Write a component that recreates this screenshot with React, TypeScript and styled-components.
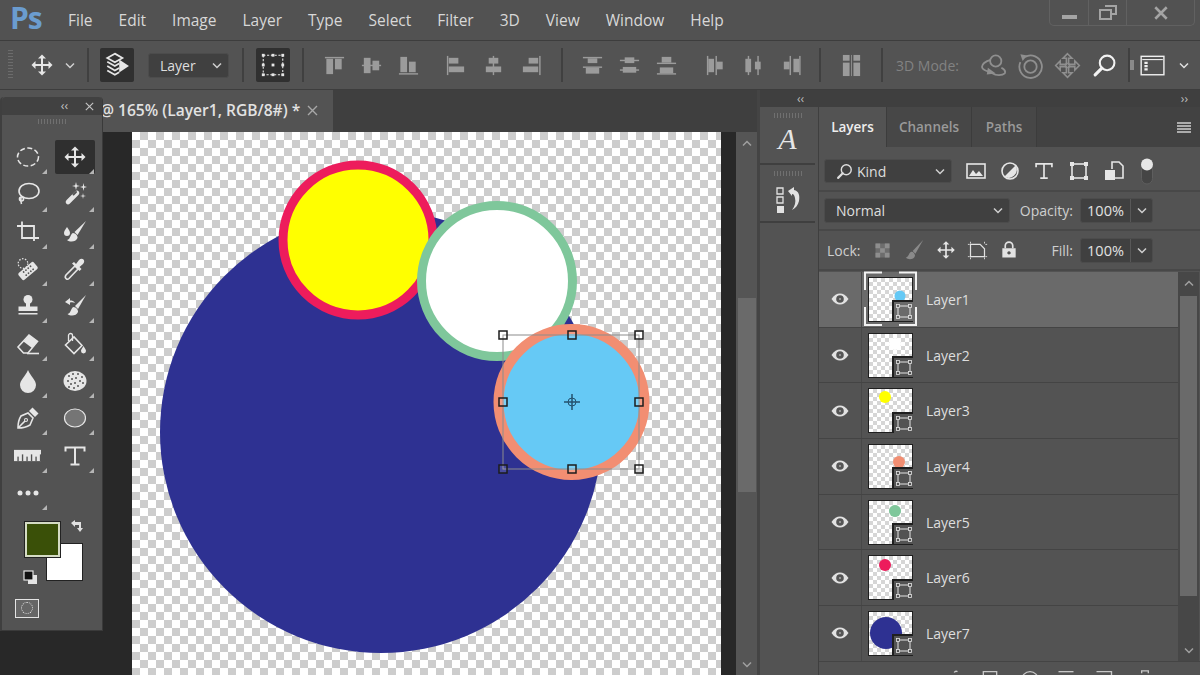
import React from "react";
import { createGlobalStyle, styled } from "styled-components";

const GlobalStyle = createGlobalStyle`
  html, body { margin: 0; padding: 0; background: #535353; }
  body { font-family: "Open Sans", "Liberation Sans", sans-serif; }
  * { box-sizing: border-box; }
`;

const CHECK = "repeating-conic-gradient(#cdcdcd 0 25%, #ffffff 0 50%)";

const Page = styled.div`
  position: relative;
  width: 1200px;
  height: 675px;
  overflow: hidden;
  display: flex;
  flex-direction: column;
  background: #535353;
  color: #dcdcdc;
`;

/* ---------- menu ---------- */
const MenuBar = styled.div`
  height: 40px;
  flex: none;
  display: flex;
  align-items: center;
  padding-left: 10px;
  background: #525252;
`;
const Logo = styled.span`
  width: 58px;
  font-size: 30px;
  line-height: 34px;
  font-weight: 700;
  letter-spacing: -1px;
  color: #6b9ccf;
  margin-top: -4px;
`;
const MenuItems = styled.div`
  display: flex;
  gap: 26px;
  font-size: 15.5px;
  color: #d8d8d8;
`;
const WindowControls = styled.div`
  display: flex;
  align-self: flex-start;
  margin-left: auto;
  margin-right: 5px;
  height: 26px;
  border: 1px solid #616161;
  border-top: 0;
  border-radius: 0 0 5px 5px;
`;
const WindowButton = styled.div<{ $w: number; $low?: boolean }>`
  width: ${(p) => p.$w}px;
  display: flex;
  align-items: center;
  justify-content: center;
  padding-top: ${(p) => (p.$low ? 8 : 0)}px;
  & + & { border-left: 1px solid #616161; }
`;

/* ---------- options bar ---------- */
const OptionsBar = styled.div`
  height: 50px;
  flex: none;
  display: flex;
  align-items: center;
  background: #535353;
  border-top: 1px solid #3d3d3d;
  border-bottom: 1px solid #3d3d3d;
`;
const Slot = styled.div<{ $w: number }>`
  width: ${(p) => p.$w}px;
  flex: none;
  display: flex;
  align-items: center;
  justify-content: center;
`;
const Divider = styled(Slot)`
  &::before {
    content: "";
    width: 2px;
    height: 34px;
    background: #404040;
  }
`;
const Grip = styled.div`
  width: 5px;
  height: 30px;
  background: repeating-linear-gradient(#6c6c6c 0 1px, transparent 1px 3px);
`;
const DarkButton = styled.div`
  width: 34px;
  height: 34px;
  flex: none;
  display: flex;
  align-items: center;
  justify-content: center;
  border-radius: 2px;
  background: #303030;
`;
const Dropdown = styled.div<{ $w: number; $h?: number }>`
  width: ${(p) => p.$w}px;
  height: ${(p) => p.$h ?? 25}px;
  flex: none;
  display: flex;
  align-items: center;
  gap: 4px;
  padding: 0 6px 0 11px;
  font-size: 14px;
  color: #dedede;
  background: #404040;
  border: 1px solid #4c4c4c;
  border-radius: 3px;
  span:last-child { margin-left: auto; display: flex; }
`;
const ModeLabel = styled.span`
  width: 83px;
  flex: none;
  padding-left: 4px;
  font-size: 14px;
  color: #828282;
`;
const SmallBar = styled.div`
  width: 4px;
  height: 10px;
  margin-left: -6px;
  background: #8a8a8a;
`;

/* ---------- workspace ---------- */
const Workspace = styled.div`
  flex: 1;
  min-height: 0;
  display: flex;
`;
const DocArea = styled.div`
  width: 760px;
  flex: none;
  display: flex;
  flex-direction: column;
  border-right: 3px solid #444;
`;
const DocTabs = styled.div`
  height: 42px;
  flex: none;
  display: flex;
  background: #3f3f3f;
`;
const DocTab = styled.div`
  width: 333px;
  display: flex;
  align-items: center;
  gap: 7px;
  padding: 0 0 2px 100px;
  font-size: 15.6px;
  font-weight: 600;
  color: #e2e2e2;
  background: #535353;
  white-space: nowrap;
`;
const DocBody = styled.div`
  flex: 1;
  min-height: 0;
  display: flex;
  background: #282828;
`;
const CanvasFrame = styled.div`
  width: 589px;
  margin-left: 132px;
  background: ${CHECK} 0 0 / 16px 16px;
  overflow: hidden;
  svg { display: block; }
`;
const Track = styled.div<{ $w: number; $bg: string }>`
  width: ${(p) => p.$w}px;
  flex: none;
  display: flex;
  flex-direction: column;
  align-items: center;
  background: ${(p) => p.$bg};
`;
const TrackArrow = styled.div<{ $after?: boolean }>`
  height: 22px;
  flex: none;
  display: flex;
  align-items: center;
  justify-content: center;
  margin-top: ${(p) => (p.$after ? "auto" : 0)};
`;
const Thumb = styled.div<{ $top: number; $h: number; $w: number }>`
  width: ${(p) => p.$w}px;
  height: ${(p) => p.$h}px;
  flex: none;
  margin-top: ${(p) => p.$top}px;
  background: #6a6a6a;
`;
const ScrollSpacer = styled.div<{ $w: number }>`
  width: ${(p) => p.$w}px;
  flex: none;
`;

/* ---------- right dock ---------- */
const Dock = styled.div`
  flex: 1;
  display: flex;
  flex-direction: column;
  min-width: 0;
`;
const DockHeader = styled.div`
  height: 17px;
  flex: none;
  display: flex;
  justify-content: space-between;
  align-items: center;
  padding: 0 12px 0 37px;
  font-size: 12px;
  line-height: 14px;
  color: #bdbdbd;
  background: #3f3f3f;
`;
const DockColumns = styled.div`
  flex: 1;
  min-height: 0;
  display: flex;
`;
const Strip = styled.div`
  width: 55px;
  flex: none;
  display: flex;
  flex-direction: column;
  background: #535353;
`;
const StripCell = styled.div<{ $h: number }>`
  height: ${(p) => p.$h}px;
  flex: none;
  display: flex;
  flex-direction: column;
  align-items: center;
  padding-top: 6px;
  border-bottom: 2px solid #3f3f3f;
`;
const StripGrip = styled.div`
  width: 28px;
  height: 5px;
  margin-bottom: 5px;
  background: repeating-linear-gradient(90deg, #707070 0 1px, transparent 1px 3px);
`;
const StyledA = styled.span`
  font-family: "Liberation Serif", serif;
  font-style: italic;
  font-size: 30px;
  line-height: 32px;
  color: #e6e6e6;
`;
const HistoryGlyph = styled.svg`
  display: block;
  margin-top: 5px;
`;
const Panel = styled.div`
  flex: 1;
  min-width: 0;
  display: flex;
  flex-direction: column;
  margin-left: 3px;
  background: #535353;
  border-left: 1px solid #3f3f3f;
`;
const TabStrip = styled.div`
  height: 40px;
  flex: none;
  display: flex;
  align-items: stretch;
  background: #424242;
`;
const PanelTab = styled.div<{ $w: number; $active?: boolean }>`
  width: ${(p) => p.$w}px;
  display: flex;
  align-items: center;
  justify-content: center;
  font-size: 13.5px;
  font-weight: 600;
  color: ${(p) => (p.$active ? "#eeeeee" : "#9a9a9a")};
  background: ${(p) => (p.$active ? "#535353" : "#474747")};
  border-right: 1px solid #3c3c3c;
`;
const PanelMenu = styled.div`
  margin-left: auto;
  padding-right: 9px;
  display: flex;
  align-items: center;
`;
const PanelRow = styled.div<{ $h: number; $top?: number }>`
  height: ${(p) => p.$h}px;
  flex: none;
  display: flex;
  align-items: center;
  padding: ${(p) => p.$top ?? 0}px 0 0 5px;
  border-bottom: 2px solid #484848;
`;
const FilterIcons = styled.div`
  display: flex;
  align-items: center;
  margin-left: 6px;
`;
const RowLabel = styled.span<{ $w: number; $pad?: number }>`
  width: ${(p) => p.$w}px;
  flex: none;
  padding-left: ${(p) => p.$pad ?? 0}px;
  font-size: 14px;
  color: #cfcfcf;
  text-align: ${(p) => (p.$pad === undefined ? "right" : "left")};
`;
const Field = styled.div`
  width: 73px;
  height: 25px;
  flex: none;
  display: flex;
  margin-left: 7px;
  font-size: 14.5px;
  color: #e2e2e2;
  background: #404040;
  border: 1px solid #4c4c4c;
  border-radius: 3px;
`;
const FieldValue = styled.div`
  width: 50px;
  display: flex;
  align-items: center;
  justify-content: center;
  border-right: 1px solid #585858;
`;
const FieldArrow = styled.div`
  flex: 1;
  display: flex;
  align-items: center;
  justify-content: center;
`;
const LockIcons = styled.div`
  display: flex;
  width: 180px;
  flex: none;
`;
const LayersBody = styled.div`
  flex: 1;
  min-height: 0;
  display: flex;
  padding-top: 1px;
`;
const LayerList = styled.div`
  width: 359px;
  flex: none;
`;
const LayerRow = styled.div<{ $selected?: boolean }>`
  height: 55.7px;
  display: flex;
  align-items: center;
  font-size: 14px;
  color: #dedede;
  background: ${(p) => (p.$selected ? "#6a6a6a" : "#535353")};
  border-bottom: 1px solid #444;
`;
const EyeCell = styled.div`
  width: 43px;
  height: 100%;
  flex: none;
  display: flex;
  align-items: center;
  justify-content: center;
  border-right: 1px solid #484848;
`;
const LayerThumb = styled.div`
  position: relative;
  width: 45px;
  height: 45px;
  flex: none;
  margin: 0 13px 0 6px;
  background: repeating-conic-gradient(#d6d6d6 0 25%, #ffffff 0 50%) 0 0 / 8px 8px;
  border: 1.5px solid #1f1f1f;
`;
const ThumbArt = styled.svg`
  position: absolute;
  left: -1.5px;
  top: -1.5px;
  overflow: visible;
`;
const PanelFooter = styled.div`
  height: 14px;
  flex: none;
  display: flex;
  align-items: flex-start;
  padding: 8px 0 0 122px;
  overflow: hidden;
  border-top: 1px solid #444;
`;

/* ---------- tools ---------- */
const ToolsPanel = styled.div`
  position: absolute;
  left: 0;
  top: 97px;
  width: 103px;
  height: 534px;
  display: flex;
  flex-direction: column;
  background: #535353;
  border-left: 2px solid #3f3f3f;
  border-right: 1px solid #3a3a3a;
  border-bottom: 1px solid #3a3a3a;
  border-radius: 4px 4px 0 0;
`;
const ToolsHead = styled.div`
  height: 18px;
  flex: none;
  display: flex;
  align-items: center;
  justify-content: flex-end;
  gap: 17px;
  padding-right: 8px;
  font-size: 12px;
  line-height: 14px;
  color: #c4c4c4;
  background: #414141;
  border-radius: 4px 4px 0 0;
`;
const ToolsGrip = styled(StripGrip)`
  align-self: center;
  margin: 4px 0 14px;
`;
const ToolGrid = styled.div`
  display: grid;
  grid-template-columns: 47px 47px;
  grid-auto-rows: 37.3px;
  padding-left: 1.5px;
`;
const ToolCell = styled.div<{ $active?: boolean }>`
  position: relative;
  display: flex;
  align-items: center;
  justify-content: center;
  margin: 2px 3px 1px 4px;
  border-radius: 2px;
  background: ${(p) => (p.$active ? "#2f2f2f" : "transparent")};
  &::after {
    content: "";
    position: absolute;
    right: 1px;
    bottom: 0;
    border-style: solid;
    border-width: 0 0 5px 5px;
    border-color: transparent transparent #b5b5b5 transparent;
  }
`;
const Swatches = styled.div`
  position: relative;
  width: 100px;
  height: 66px;
  margin-top: 11px;
  flex: none;
`;
const Foreground = styled.div`
  position: absolute;
  left: 23px;
  top: 0;
  width: 35px;
  height: 35px;
  z-index: 1;
  background: #3a5008;
  border: 2px solid #d5dcc4;
  outline: 1px solid #222;
`;
const Background = styled.div`
  position: absolute;
  left: 45px;
  top: 22px;
  width: 35px;
  height: 36px;
  background: #ffffff;
  outline: 1px solid #222;
`;
const SwapIcon = styled.div`
  position: absolute;
  left: 67px;
  top: -4px;
`;
const DefaultColors = styled.div`
  position: absolute;
  left: 21px;
  top: 46px;
`;
const QuickMask = styled.div`
  width: 24px;
  height: 19px;
  flex: none;
  margin: 11px 0 0 13px;
  display: flex;
  align-items: center;
  justify-content: center;
  background: #666;
  border: 1.5px solid #e4e4e4;
`;
const MaskDots = styled.div`
  width: 12px;
  height: 12px;
  border: 1.5px dotted #e4e4e4;
  border-radius: 50%;
`;

/* ---------- icons ---------- */
const MOVE = "M12 1.5l4 4h-3v5.5h5.5V8l4 4-4 4v-3H13v5.5h3l-4 4-4-4h3V13H5.5v3l-4-4 4-4v3H11V5.5H8z";

const bars: Record<string, number[][]> = {
  alignTop: [[2, 3, 20, 1.5], [3.5, 5, 7, 16], [12.5, 5, 7, 11]],
  alignMiddle: [[2, 11.2, 20, 1.5], [4, 4, 7, 16], [13, 7, 7, 10]],
  alignBottom: [[2, 20, 20, 1.5], [3.5, 3, 7, 16], [12.5, 8, 7, 11]],
  alignLeft: [[3, 2, 1.5, 20], [5, 4, 10, 6], [5, 13, 16, 6]],
  alignCenter: [[11.2, 2, 1.5, 20], [7, 4, 10, 6], [4, 13, 16, 6]],
  alignRight: [[20, 2, 1.5, 20], [9, 4, 10, 6], [3, 13, 16, 6]],
  distTop: [[2, 3, 20, 1.5], [7, 4.5, 10, 5], [2, 13, 20, 1.5], [5, 14.5, 14, 6]],
  distMiddle: [[2, 6, 20, 1.5], [7, 3.5, 10, 6], [2, 16, 20, 1.5], [5, 13.5, 14, 6]],
  distBottom: [[7, 3, 10, 6], [2, 9, 20, 1.5], [5, 14, 14, 6], [2, 20, 20, 1.5]],
  distLeft: [[3, 2, 1.5, 20], [4.5, 5, 6, 14], [12, 2, 1.5, 20], [13.5, 8, 6, 8]],
  distCenter: [[6, 2, 1.5, 20], [3.5, 5, 6, 14], [16, 2, 1.5, 20], [13.5, 8, 6, 8]],
  distRight: [[4, 8, 6, 8], [10, 2, 1.5, 20], [14, 5, 6, 14], [20, 2, 1.5, 20]],
  columns: [[3, 1, 7, 6], [3, 9, 7, 14], [14, 1, 7, 6], [14, 9, 7, 14], [11.6, 1, 0.8, 22]],
};

type IconProps = { size?: number; color?: string };

const Svg = ({ size = 24, color = "#e6e6e6", children }: IconProps & { children: React.ReactNode }) => (
  <svg width={size} height={size} viewBox="0 0 24 24" fill={color} stroke="none" style={{ color, display: "block" }}>
    {children}
  </svg>
);

const Bars = ({ name }: { name: string }) => (
  <Svg size={23} color="#9b9b9b">
    {bars[name].map(([x, y, w, h], i) => (
      <rect key={i} x={x} y={y} width={w} height={h} />
    ))}
  </Svg>
);

const line = { fill: "none", stroke: "currentColor", strokeWidth: 1.6 } as const;

const Chevron = ({ color = "#cfcfcf", up }: { color?: string; up?: boolean }) => (
  <svg width="10" height="7" viewBox="0 0 10 7" style={{ display: "block" }}>
    <path d={up ? "M1 5.5L5 1.5 9 5.5" : "M1 1.5L5 5.5 9 1.5"} fill="none" stroke={color} strokeWidth="1.5" />
  </svg>
);

const MoveIcon = (p: IconProps) => (
  <Svg {...p}>
    <path d={MOVE} />
  </Svg>
);
const LayerPick = () => (
  <Svg size={26}>
    <path d="M10 1.5l7 4-7 4-7-4z" {...line} />
    <path d="M3 9l7 4 4-2.3M3 13l7 4 4-2.3M3 17l7 4 4-2.3" {...line} />
    <path d="M14 7l9 6-9 6z" />
  </Svg>
);
const TransformBox = ({ size = 26, color }: IconProps) => (
  <Svg size={size} color={color}>
    <rect x="3" y="3" width="18" height="18" fill="none" stroke="currentColor" strokeWidth="1" strokeDasharray="2 1.5" />
    {[3, 12, 21].flatMap((y) =>
      [3, 12, 21].map((x) => <rect key={`${x}${y}`} x={x - 1.3} y={y - 1.3} width="2.6" height="2.6" />),
    )}
  </Svg>
);
const Orbit = () => (
  <Svg size={27} color="#8f8f8f">
    <circle cx="14" cy="8" r="5" {...line} />
    <path d="M9.5 7C5 8 1 11 2 14c1 3 6 3 9 5 3 2 9 2 11 0 1-2-1-4-3-5" {...line} />
    <path d="M7 14l7 5-8 1z" />
  </Svg>
);
const RollRing = () => (
  <Svg size={27} color="#8f8f8f">
    <path d="M7 4.5A10 10 0 1 1 3 9" {...line} />
    <circle cx="12" cy="13" r="5.5" {...line} />
    <path d="M3 2l6 1-4 5z" />
  </Svg>
);
const PanCross = () => (
  <Svg size={27} color="#8f8f8f">
    <path d={MOVE} {...line} strokeWidth={1.4} />
    <circle cx="12" cy="12" r="2" {...line} strokeWidth={1} />
  </Svg>
);
const SearchGlass = ({ size = 25, color = "#f2f2f2" }: IconProps) => (
  <Svg size={size} color={color}>
    <circle cx="14.5" cy="9.5" r="7" {...line} strokeWidth={2} />
    <path d="M9.5 14.5L3 21" {...line} strokeWidth={3} strokeLinecap="round" />
  </Svg>
);
const WorkspaceIcon = () => (
  <Svg size={26} color="#f0f0f0">
    <rect x="2" y="4" width="21" height="17" {...line} strokeWidth={1.3} />
    <path d="M3 7h19" {...line} strokeWidth={1} />
    <path d="M5 9h3v2H5zM5 12h3v2H5zM5 15h3v2H5z" />
  </Svg>
);
const Hamburger = () => (
  <svg width="14" height="11" viewBox="0 0 14 11" style={{ display: "block" }}>
    <path d="M0 1h14M0 4h14M0 7h14M0 10h14" stroke="#cfcfcf" strokeWidth="1.4" />
  </svg>
);
const Close = ({ size = 11, color = "#bdbdbd", w = 1.4 }: { size?: number; color?: string; w?: number }) => (
  <svg width={size} height={size} viewBox="0 0 11 11" style={{ display: "block" }}>
    <path d="M1 1l9 9M10 1l-9 9" stroke={color} strokeWidth={w} />
  </svg>
);
const Eye = () => (
  <svg width="18" height="12" viewBox="0 0 18 12" style={{ display: "block" }}>
    <path d="M0.5 6C3 2 6 0.5 9 0.5S15 2 17.5 6C15 10 12 11.5 9 11.5S3 10 0.5 6z" fill="#e2e2e2" />
    <circle cx="9" cy="6" r="3.8" fill="#555" />
    <circle cx="9" cy="6" r="1" fill="#aaa" />
  </svg>
);

const Marquee = () => (
  <Svg>
    <ellipse cx="12" cy="12" rx="10.5" ry="9" {...line} strokeWidth={1.5} strokeDasharray="5 2.5" />
  </Svg>
);
const Lasso = () => (
  <Svg>
    <ellipse cx="13" cy="9" rx="10" ry="7.5" {...line} />
    <circle cx="5.5" cy="17" r="2" {...line} />
    <path d="M5 15c-.5 2.5-.5 4 .5 7" {...line} />
  </Svg>
);
const Wand = () => (
  <Svg>
    <path d="M5 20L14 11" {...line} strokeWidth={4.6} strokeLinecap="round" />
    <path d="M10.5 12.5L13 10" stroke="#535353" strokeWidth="2" strokeLinecap="round" fill="none" />
    <path d="M13 0l.8 3.2L17 4l-3.2.8L13 8l-.8-3.2L9 4l3.2-.8zM20.5 1l.7 3.3 2.8.7-2.8.7-.7 3.3-.7-3.3L17 5l2.8-.7zM20 11l.5 2.5 2.5.5-2.5.5-.5 2.5-.5-2.5L17 14l2.5-.5z" />
  </Svg>
);
const Crop = () => (
  <Svg>
    <path d="M1 6h17v15M6 1.5V18h17" {...line} strokeWidth={1.8} />
  </Svg>
);
const DropBrush = () => (
  <Svg>
    <path d="M23 1L11.5 12l3 3z" />
    <path d="M10 13c-3 1-2 6-6 7 3 2.5 9 2 10.5-2 .5-2-2-5-4.5-5z" />
    <path d="M4 7c-2 3-3 4-3 6a3 3 0 0 0 6 0c0-2-1-3-3-6z" />
  </Svg>
);
const Bandage = () => (
  <Svg>
    <circle cx="7" cy="6.5" r="4.8" {...line} strokeWidth={1.2} strokeDasharray="1.5 1.5" />
    <g transform="rotate(-40 12 14)">
      <rect x="2" y="9.5" width="20" height="9" rx="2" />
      {[8, 11, 14, 17].flatMap((x) =>
        [12, 16].map((y) => <circle key={`${x}${y}`} cx={x} cy={y} r="0.9" fill="#535353" />),
      )}
    </g>
  </Svg>
);
const Dropper = () => (
  <Svg>
    <path d="M3.5 22c-1.5-1-1.5-2.5-.5-4l9-9 3 3-9 9.5c-1 1-1.5 1-2.5.5z" {...line} />
    <path d="M11 5l2 2 3-4c1.5-1.5 3.5-1.5 4.5-.5s1 3-.5 4.5l-3.5 3 2 2-2 2-7.5-7.5z" />
  </Svg>
);
const Stamp = () => (
  <Svg>
    <circle cx="12" cy="5.5" r="4.5" />
    <path d="M10 9h4v3.5h7.5V17h-19v-4.5H10z" />
    <path d="M2.5 19h19v1.5h-19z" />
  </Svg>
);
const HistoryBrush = () => (
  <Svg>
    <path d="M23 1L12 12l3 3z" />
    <path d="M10.5 13c-3 1-2 6-6 7 3 2.5 9 2 10.5-2 .5-2-2-5-4.5-5z" />
    <path d="M2 8l5-4v2.5c2 0 4 .5 5 2.5-2-1-3-1-5-.5V11z" />
  </Svg>
);
const Eraser = () => (
  <Svg>
    <path d="M2 15L13 3l8.5 6.5L12 21H7.5z" {...line} />
    <path d="M7.5 9.5L13 3l8.5 6.5L16 16z" />
    <path d="M11 21.5h12" {...line} />
  </Svg>
);
const Bucket = () => (
  <Svg>
    <path d="M2.5 13L11 5l8 8.5-8 8z" {...line} />
    <path d="M5.5 9V3.5a2 2 0 0 1 4 0V9" {...line} strokeWidth={1.3} />
    <path d="M20.5 14c-1.5 2.5-2.5 3.5-2.5 5a2.5 2.5 0 0 0 5 0c0-1.5-1-2.5-2.5-5z" />
  </Svg>
);
const Drop = () => (
  <Svg>
    <path d="M12 1c-3 7-8 10-8 15a8 8 0 0 0 16 0c0-5-5-8-8-15z" />
  </Svg>
);
const Sponge = () => (
  <Svg>
    <ellipse cx="12" cy="12" rx="11.5" ry="10" />
    {[[6, 7], [10, 5], [15, 5], [19, 8], [5, 12], [9, 10], [13, 9], [17, 12], [8, 15], [12, 14], [15, 17], [20, 14], [6, 18], [11, 19]].map(
      ([x, y]) => (
        <circle key={`${x}-${y}`} cx={x} cy={y} r="1" fill="#535353" />
      ),
    )}
  </Svg>
);
const Pen = () => (
  <Svg>
    <path d="M2 22c0-5 1-9 3-12l7-3 5 5-3 7c-3 2-7 3-12 3zM2 22l7-7" {...line} />
    <circle cx="10" cy="14" r="1.5" {...line} strokeWidth={1.1} />
    <path d="M13 5l3.5-3.5 6 6L19 11z" />
  </Svg>
);
const EllipseTool = () => (
  <Svg>
    <ellipse cx="12" cy="12" rx="10.5" ry="9" fill="#757575" stroke="currentColor" strokeWidth="1.2" />
  </Svg>
);
const Ruler = () => (
  <Svg size={27}>
    <path d="M0 7h26v10H0z" />
    {[3, 7, 11, 15, 19, 23].map((x, i) => (
      <rect key={x} x={x} y={i % 2 ? 11 : 13} width="1.2" height={i % 2 ? 6 : 4} fill="#535353" />
    ))}
  </Svg>
);
const TypeT = ({ size = 24, color }: IconProps) => (
  <Svg size={size} color={color}>
    <path d="M2.5 7.5V3.5h19v4M12 3.5V20.5M7.5 20.5h9" {...line} strokeWidth={2} />
  </Svg>
);
const Dots = () => (
  <Svg>
    <circle cx="4" cy="12" r="2.5" />
    <circle cx="12" cy="12" r="2.5" />
    <circle cx="20" cy="12" r="2.5" />
  </Svg>
);

const FilterImage = () => (
  <Svg>
    <rect x="3" y="5" width="18" height="14" {...line} />
    <path d="M5 17l4-6 3 4 3-3 4 5z" />
  </Svg>
);
const FilterAdjust = () => (
  <Svg>
    <circle cx="12" cy="12" r="8" {...line} />
    <path d="M6.5 17.5A8 8 0 0 0 17.5 6.5z" />
  </Svg>
);
const FilterShape = () => (
  <Svg>
    <rect x="5" y="5" width="14" height="14" {...line} />
    {[5, 19].flatMap((y) => [5, 19].map((x) => <rect key={`${x}${y}`} x={x - 2} y={y - 2} width="4" height="4" />))}
  </Svg>
);
const FilterSmart = () => (
  <Svg>
    <path d="M10 10V3h7l4 4v12h-8" {...line} />
    <path d="M3 11h10v10H3z" />
  </Svg>
);
const LockPixels = () => (
  <Svg size={21} color="#8f8f8f">
    <path d="M4 4h5.3v5.3H4zM14.7 4H20v5.3h-5.3zM9.3 9.3h5.4v5.4H9.3zM4 14.7h5.3V20H4zM14.7 14.7H20V20h-5.3z" />
    <rect x="4" y="4" width="16" height="16" fill="currentColor" opacity="0.45" />
  </Svg>
);
const LockBrush = () => (
  <Svg size={22} color="#8a8a8a">
    <path d="M22 1L10.5 13l3 3z" />
    <path d="M9 14c-3 1-2 5-6 6.5 3 2.5 9 2 10-2 .5-2-2-5-4-4.5z" />
  </Svg>
);
const LockArtboard = () => (
  <Svg size={21} color="#e2e2e2">
    <path d="M4 5h11l5 5v9H4z" {...line} strokeWidth={1.4} />
    <path d="M1 5h2M21 5h2M1 19h2M21 19h2M4 2v2M20 2v2M4 20v2M20 20v2" {...line} strokeWidth={1} />
  </Svg>
);
const Padlock = () => (
  <Svg size={20} color="#e2e2e2">
    <path d="M7.5 10V7a4.5 4.5 0 0 1 9 0v3" {...line} strokeWidth={2} />
    <path fillRule="evenodd" d="M4 10h16v11H4zM12 13.5a2 2 0 1 0 .001 0z" />
  </Svg>
);

const toolIcons: [React.ReactNode, boolean?][] = [
  [<Marquee />],
  [<MoveIcon />, true],
  [<Lasso />],
  [<Wand />],
  [<Crop />],
  [<DropBrush />],
  [<Bandage />],
  [<Dropper />],
  [<Stamp />],
  [<HistoryBrush />],
  [<Eraser />],
  [<Bucket />],
  [<Drop />],
  [<Sponge />],
  [<Pen />],
  [<EllipseTool />],
  [<Ruler />],
  [<TypeT />],
  [<Dots />],
];

const handles = [
  [503, 335], [572, 335], [639, 335],
  [503, 402], [639, 402],
  [503, 469], [572, 469], [639, 469],
];

const layers = [
  { name: "Layer1", color: "#66c9f5", x: 32, y: 20, r: 5.5, selected: true },
  { name: "Layer2", color: "#ffffff", x: 27, y: 12, r: 6 },
  { name: "Layer3", color: "#ffff00", x: 17, y: 9, r: 6 },
  { name: "Layer4", color: "#f28e72", x: 31, y: 19, r: 6 },
  { name: "Layer5", color: "#7fc79b", x: 27, y: 12, r: 6 },
  { name: "Layer6", color: "#ed1c5c", x: 17, y: 10, r: 6 },
  { name: "Layer7", color: "#2e3192", x: 18, y: 23, r: 16 },
];

const Artwork = () => (
  <svg width="589" height="543" viewBox="132 132 589 543">
    <circle cx="381" cy="432" r="221" fill="#2e3192" />
    <circle cx="358" cy="240" r="75" fill="#ffff00" stroke="#ed1c5c" strokeWidth="9" />
    <circle cx="497" cy="281" r="75.5" fill="#ffffff" stroke="#7fc79b" strokeWidth="9" />
    <circle cx="571.5" cy="402" r="73" fill="#66c9f5" stroke="#f28e72" strokeWidth="10" />
    <rect x="503" y="335" width="136" height="134" fill="none" stroke="#8c8c8c" strokeWidth="1" />
    {handles.map(([x, y]) => (
      <rect key={`${x}-${y}`} x={x - 4} y={y - 4} width="8" height="8" fill="#ffffff22" stroke="#1c1c1c" strokeWidth="1.5" />
    ))}
    <g stroke="#24516e" fill="none">
      <circle cx="572" cy="402" r="4" strokeWidth="1" />
      <path d="M572 394v16M564 402h16" strokeWidth="1.5" />
    </g>
  </svg>
);

const LayerItem = ({ layer }: { layer: (typeof layers)[number] }) => {
  const bg = layer.selected ? "#6a6a6a" : "#535353";
  return (
    <LayerRow $selected={layer.selected}>
      <EyeCell>
        <Eye />
      </EyeCell>
      <LayerThumb>
        <ThumbArt width="45" height="45" viewBox="0 0 45 45">
          <circle cx={layer.x} cy={layer.y} r={layer.r} fill={layer.color} />
          <path d="M45 25H25V45H45z" fill={bg} />
          <path d="M45 25H25V45" fill="none" stroke="#1f1f1f" strokeWidth="2" />
          <rect x="30" y="30" width="12" height="11" fill="none" stroke="#e4e4e4" strokeWidth="1" />
          {[30, 42].flatMap((x) =>
            [30, 41].map((y) => (
              <rect key={`${x}${y}`} x={x - 1.5} y={y - 1.5} width="3" height="3" fill={bg} stroke="#e4e4e4" strokeWidth="0.8" />
            )),
          )}
          {layer.selected && (
            <path
              d="M-3 14V-3.5H14M31-3.5H48V14M48 31V49H31M14 49H-3V31"
              fill="none"
              stroke="#f2f2f2"
              strokeWidth="2"
            />
          )}
        </ThumbArt>
      </LayerThumb>
      {layer.name}
    </LayerRow>
  );
};

export default function App() {
  return (
    <Page>
      <GlobalStyle />
      <MenuBar>
        <Logo>Ps</Logo>
        <MenuItems>
          {["File", "Edit", "Image", "Layer", "Type", "Select", "Filter", "3D", "View", "Window", "Help"].map((m) => (
            <span key={m}>{m}</span>
          ))}
        </MenuItems>
        <WindowControls>
          <WindowButton $w={38} $low>
            <svg width="15" height="4" viewBox="0 0 15 4" style={{ display: "block" }}>
              <rect width="15" height="4" fill="#a4a4a4" />
            </svg>
          </WindowButton>
          <WindowButton $w={38}>
            <svg width="18" height="15" viewBox="0 0 18 15">
              <path d="M6 1h11v8h-4M1 5h11v9H1z" fill="none" stroke="#a4a4a4" strokeWidth="2" />
            </svg>
          </WindowButton>
          <WindowButton $w={68}>
            <Close size={14} color="#a4a4a4" w={2} />
          </WindowButton>
        </WindowControls>
      </MenuBar>

      <OptionsBar>
        <Slot $w={20}><Grip /></Slot>
        <Slot $w={44}><MoveIcon size={24} /></Slot>
        <Slot $w={12}><Chevron /></Slot>
        <Divider $w={24} />
        <DarkButton><LayerPick /></DarkButton>
        <Slot $w={14} />
        <Dropdown $w={81}>
          <span>Layer</span>
          <span><Chevron /></span>
        </Dropdown>
        <Divider $w={27} />
        <DarkButton><TransformBox /></DarkButton>
        <Divider $w={26} />
        {["alignTop", "alignMiddle", "alignBottom"].map((n) => (
          <Slot $w={37} key={n}><Bars name={n} /></Slot>
        ))}
        <Slot $w={9} />
        {["alignLeft", "alignCenter", "alignRight"].map((n) => (
          <Slot $w={38} key={n}><Bars name={n} /></Slot>
        ))}
        <Divider $w={24} />
        {["distTop", "distMiddle", "distBottom"].map((n) => (
          <Slot $w={37} key={n}><Bars name={n} /></Slot>
        ))}
        <Slot $w={11} />
        {["distLeft", "distCenter", "distRight"].map((n) => (
          <Slot $w={38} key={n}><Bars name={n} /></Slot>
        ))}
        <Divider $w={20} />
        <Slot $w={42}><Bars name="columns" /></Slot>
        <Divider $w={20} />
        <ModeLabel>3D Mode:</ModeLabel>
        <Slot $w={37}><Orbit /></Slot>
        <Slot $w={37}><RollRing /></Slot>
        <Slot $w={37}><PanCross /></Slot>
        <Slot $w={36}><SearchGlass /></Slot>
        <Divider $w={14} />
        <SmallBar />
        <Slot $w={36}><WorkspaceIcon /></Slot>
        <Slot $w={28}><Chevron color="#e0e0e0" /></Slot>
      </OptionsBar>

      <Workspace>
        <DocArea>
          <DocTabs>
            <DocTab>
              @ 165% (Layer1, RGB/8#) *
              <Close color="#a8a8a8" />
            </DocTab>
          </DocTabs>
          <DocBody>
            <CanvasFrame>
              <Artwork />
            </CanvasFrame>
            <ScrollSpacer $w={15} />
            <Track $w={21} $bg="#555555">
              <TrackArrow><Chevron color="#a0a0a0" up /></TrackArrow>
              <Thumb $top={144} $h={194} $w={18} />
              <TrackArrow $after><Chevron color="#a0a0a0" /></TrackArrow>
            </Track>
          </DocBody>
        </DocArea>

        <Dock>
          <DockHeader>
            <span>‹‹</span>
            <span>››</span>
          </DockHeader>
          <DockColumns>
            <Strip>
              <StripCell $h={58}>
                <StripGrip />
                <StyledA>A</StyledA>
              </StripCell>
              <StripCell $h={58}>
                <StripGrip />
                <HistoryGlyph width="26" height="28" viewBox="0 0 26 28">
                  <path d="M2 2h6v6H2zM2 11h6v6H2z" fill="none" stroke="#e2e2e2" strokeWidth="1.3" />
                  <path d="M2 20h7v7H2z" fill="#e2e2e2" />
                  <path d="M13 5l6-4v3c5 1 6 6 5 11-1 4-3 7-7 9 3-4 4-8 3-12-.5-2-1-4-3-4v2z" fill="#e2e2e2" />
                </HistoryGlyph>
              </StripCell>
            </Strip>
            <Panel>
              <TabStrip>
                <PanelTab $w={68} $active>Layers</PanelTab>
                <PanelTab $w={85}>Channels</PanelTab>
                <PanelTab $w={65}>Paths</PanelTab>
                <PanelMenu><Hamburger /></PanelMenu>
              </TabStrip>
              <PanelRow $h={45} $top={5}>
                <Dropdown $w={128} $h={24}>
                  <SearchGlass size={17} color="#dedede" />
                  <span>Kind</span>
                  <span><Chevron /></span>
                </Dropdown>
                <FilterIcons>
                  <Slot $w={35}><FilterImage /></Slot>
                  <Slot $w={34}><FilterAdjust /></Slot>
                  <Slot $w={34}><TypeT size={20} /></Slot>
                  <Slot $w={35}><FilterShape /></Slot>
                  <Slot $w={35}><FilterSmart /></Slot>
                  <Slot $w={32}>
                    <svg width="14" height="27" viewBox="0 0 14 27">
                      <rect x="1.5" y="5" width="11" height="21" rx="5.5" fill="#454545" stroke="#5e5e5e" />
                      <circle cx="7" cy="6.5" r="6" fill="#e6e6e6" />
                    </svg>
                  </Slot>
                </FilterIcons>
              </PanelRow>
              <PanelRow $h={39}>
                <Dropdown $w={186}>
                  <span>Normal</span>
                  <span><Chevron /></span>
                </Dropdown>
                <RowLabel $w={63}>Opacity:</RowLabel>
                <Field>
                  <FieldValue>100%</FieldValue>
                  <FieldArrow><Chevron /></FieldArrow>
                </Field>
              </PanelRow>
              <PanelRow $h={40}>
                <RowLabel $w={43} $pad={3}>Lock:</RowLabel>
                <LockIcons>
                  <Slot $w={31}><LockPixels /></Slot>
                  <Slot $w={32}><LockBrush /></Slot>
                  <Slot $w={31}><MoveIcon size={20} /></Slot>
                  <Slot $w={32}><LockArtboard /></Slot>
                  <Slot $w={31}><Padlock /></Slot>
                </LockIcons>
                <RowLabel $w={26}>Fill:</RowLabel>
                <Field>
                  <FieldValue>100%</FieldValue>
                  <FieldArrow><Chevron /></FieldArrow>
                </Field>
              </PanelRow>
              <LayersBody>
                <LayerList>
                  {layers.map((l) => (
                    <LayerItem key={l.name} layer={l} />
                  ))}
                </LayerList>
                <Track $w={21} $bg="#474747">
                  <TrackArrow><Chevron color="#a0a0a0" up /></TrackArrow>
                  <Thumb $top={2} $h={300} $w={17} />
                  <TrackArrow $after><Chevron color="#a0a0a0" /></TrackArrow>
                </Track>
              </LayersBody>
              <PanelFooter>
                <Slot $w={28}><Svg size={20} color="#c8c8c8"><path d="M11 3c1-1.500 3-1.500 4-1" {...line} /></Svg></Slot>
                <Slot $w={42}><Svg size={20} color="#c8c8c8"><path d="M4 2h16v16H4z" {...line} /></Svg></Slot>
                <Slot $w={38}><Svg size={20} color="#c8c8c8"><circle cx="12" cy="12" r="10" {...line} /></Svg></Slot>
                <Slot $w={34}><Svg size={20} color="#c8c8c8"><path d="M3 2h18" {...line} /></Svg></Slot>
                <Slot $w={42}><Svg size={20} color="#c8c8c8"><path d="M3 2h18v18" {...line} /></Svg></Slot>
                <Slot $w={40}><Svg size={20} color="#c8c8c8"><path d="M8 4V1h8v3" {...line} /></Svg></Slot>
              </PanelFooter>
            </Panel>
          </DockColumns>
        </Dock>
      </Workspace>

      <ToolsPanel>
        <ToolsHead>
          <span>‹‹</span>
          <Close size={9} color="#c4c4c4" />
        </ToolsHead>
        <ToolsGrip />
        <ToolGrid>
          {toolIcons.map(([icon, active], i) => (
            <ToolCell key={i} $active={active}>
              {icon}
            </ToolCell>
          ))}
        </ToolGrid>
        <Swatches>
          <Foreground />
          <Background />
          <SwapIcon>
            <svg width="16" height="17" viewBox="0 0 16 17">
              <path d="M1 3l4-3v2h6v6h2l-3 4-3-4h2V5H5v2z" fill="#e0e0e0" transform="translate(1 2)" />
            </svg>
          </SwapIcon>
          <DefaultColors>
            <svg width="15" height="15" viewBox="0 0 15 15">
              <rect x="5" y="5" width="9" height="9" fill="#e4e4e4" />
              <rect x="1" y="1" width="9" height="9" fill="#111" stroke="#e4e4e4" strokeWidth="1.2" />
            </svg>
          </DefaultColors>
        </Swatches>
        <QuickMask>
          <MaskDots />
        </QuickMask>
      </ToolsPanel>
    </Page>
  );
}
